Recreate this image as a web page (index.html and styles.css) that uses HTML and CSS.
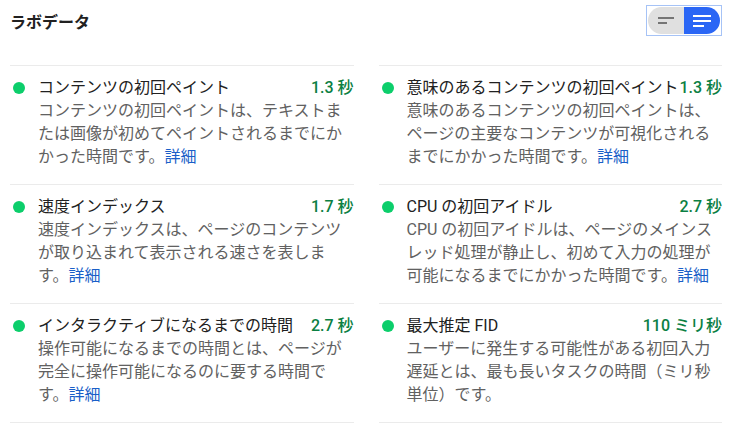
FILE: index.html
```html
<!DOCTYPE html>
<html lang="ja">
<head>
    <meta charset="UTF-8">
    <meta name="viewport" content="width=device-width, initial-scale=1.0">
    <link rel="stylesheet" href="styles.css">
    <title>ラボデータ</title>
</head>
<body>
    <div class="header">
        <div class="header-title">ラボデータ</div>
        <div class="toggle">
            <button class="toggle-btn toggle-off" aria-label="コンパクト表示">
                <svg width="18" height="10" viewBox="0 0 18 10">
                    <rect x="1" y="1" width="16" height="2" fill="#757575"/>
                    <rect x="1" y="6" width="9" height="2" fill="#757575"/>
                </svg>
            </button>
            <button class="toggle-btn toggle-on" aria-label="詳細表示">
                <svg width="20" height="14" viewBox="0 0 20 14">
                    <rect x="1" y="1" width="18" height="2" fill="#fff"/>
                    <rect x="1" y="6" width="18" height="2" fill="#fff"/>
                    <rect x="1" y="11" width="11" height="2" fill="#fff"/>
                </svg>
            </button>
        </div>
    </div>

    <div class="metrics">
        <div class="metric">
            <span class="dot"></span>
            <div class="metric-body">
                <div class="metric-head">
                    <span class="metric-title">コンテンツの初回ペイント</span>
                    <span class="metric-value">1.3 秒</span>
                </div>
                <div class="metric-desc">コンテンツの初回ペイントは、テキストまたは画像が初めてペイントされるまでにかかった時間です。<a href="#">詳細</a></div>
            </div>
        </div>
        <div class="metric">
            <span class="dot"></span>
            <div class="metric-body">
                <div class="metric-head">
                    <span class="metric-title">意味のあるコンテンツの初回ペイント</span>
                    <span class="metric-value">1.3 秒</span>
                </div>
                <div class="metric-desc">意味のあるコンテンツの初回ペイントは、ページの主要なコンテンツが可視化されるまでにかかった時間です。<a href="#">詳細</a></div>
            </div>
        </div>
        <div class="metric">
            <span class="dot"></span>
            <div class="metric-body">
                <div class="metric-head">
                    <span class="metric-title">速度インデックス</span>
                    <span class="metric-value">1.7 秒</span>
                </div>
                <div class="metric-desc">速度インデックスは、ページのコンテンツが取り込まれて表示される速さを表します。<a href="#">詳細</a></div>
            </div>
        </div>
        <div class="metric">
            <span class="dot"></span>
            <div class="metric-body">
                <div class="metric-head">
                    <span class="metric-title">CPU の初回アイドル</span>
                    <span class="metric-value">2.7 秒</span>
                </div>
                <div class="metric-desc">CPU の初回アイドルは、ページのメインスレッド処理が静止し、初めて入力の処理が可能になるまでにかかった時間です。<a href="#">詳細</a></div>
            </div>
        </div>
        <div class="metric">
            <span class="dot"></span>
            <div class="metric-body">
                <div class="metric-head">
                    <span class="metric-title">インタラクティブになるまでの時間</span>
                    <span class="metric-value">2.7 秒</span>
                </div>
                <div class="metric-desc">操作可能になるまでの時間とは、ページが完全に操作可能になるのに要する時間です。<a href="#">詳細</a></div>
            </div>
        </div>
        <div class="metric">
            <span class="dot"></span>
            <div class="metric-body">
                <div class="metric-head">
                    <span class="metric-title">最大推定 FID</span>
                    <span class="metric-value">110 ミリ秒</span>
                </div>
                <div class="metric-desc">ユーザーに発生する可能性がある初回入力遅延とは、最も長いタスクの時間（ミリ秒単位）です。</div>
            </div>
        </div>
    </div>
</body>
</html>
```

FILE: styles.css
```css
* {
    box-sizing: border-box;
}

body {
    margin: 0;
    padding: 0 28px 0 10px;
    background-color: #fff;
    font-family: Roboto, "Noto Sans CJK JP", sans-serif;
    color: #212121;
    overflow: hidden;
}

.header {
    display: flex;
    justify-content: space-between;
    align-items: flex-start;
    height: 65px;
    padding-top: 5px;
}

.header-title {
    margin-top: 6px;
    font-size: 16px;
    line-height: 24px;
    font-weight: bold;
}

.toggle {
    display: flex;
    padding: 1px;
    border: 1px solid #a6c3f6;
}

.toggle-btn {
    display: flex;
    align-items: center;
    justify-content: center;
    width: 36px;
    height: 27px;
    padding: 0;
    border: none;
    cursor: pointer;
}

.toggle-off {
    background-color: #e0e0e0;
    border-radius: 14px 0 0 14px;
}

.toggle-on {
    background-color: #2a66f5;
    border-radius: 0 14px 14px 0;
}

.metrics {
    display: grid;
    grid-template-columns: 1fr 1fr;
    column-gap: 25px;
}

.metric {
    display: flex;
    border-top: 1px solid #ebebeb;
    padding: 10px 0 16px;
}

.metric:nth-last-child(-n+2) {
    border-bottom: 1px solid #ebebeb;
}

.dot {
    flex: none;
    width: 12px;
    height: 12px;
    margin: 6px 13px 0 3px;
    border-radius: 50%;
    background-color: #0cce6b;
}

.metric-body {
    flex: 1;
    min-width: 0;
    font-size: 16px;
    line-height: 23px;
}

.metric-head {
    display: flex;
    justify-content: space-between;
}

.metric-title {
    color: #212121;
    white-space: nowrap;
}

.metric-value {
    color: #0b8043;
    font-weight: 500;
    white-space: nowrap;
}

.metric-desc {
    color: #616161;
}

.metric-desc a {
    color: #1a5fc8;
    text-decoration: none;
}
```
